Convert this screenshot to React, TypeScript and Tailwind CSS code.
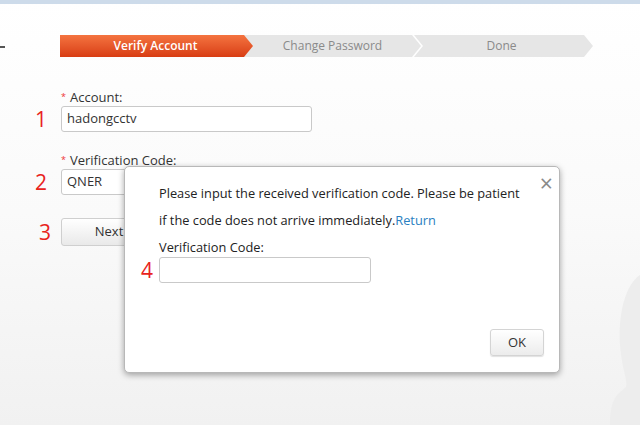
import React from 'react'

const font = { fontFamily: '"Open Sans", "Liberation Sans", sans-serif' }

function Steps() {
  return (
    <div className="flex h-[22px] text-[12px] leading-[22px]">
      <div className="relative z-10 w-[193px] bg-linear-to-b from-[#f4733f] to-[#d83c12] text-center font-semibold text-white [clip-path:polygon(0_0,calc(100%-9px)_0,100%_50%,calc(100%-9px)_100%,0_100%)]">
        <span className="pr-[2px]">Verify Account</span>
      </div>
      <div className="-ml-[9px] w-[177px] bg-[#e6e6e6] text-center text-[#8a8a8a] [clip-path:polygon(0_0,calc(100%-9px)_0,100%_50%,calc(100%-9px)_100%,0_100%)]">
        Change Password
      </div>
      <div className="-ml-[7px] w-[179px] bg-[#e6e6e6] pr-[4px] text-center text-[#8a8a8a] [clip-path:polygon(0_0,calc(100%-9px)_0,100%_50%,calc(100%-9px)_100%,0_100%,9px_50%)]">
        Done
      </div>
    </div>
  )
}

function Field({ num, label, value, top }: { num: string; label: string; value: string; top: string }) {
  return (
    <div className={top}>
      <div className="flex items-center pl-[61px] text-[13px] leading-[16px] text-[#333]">
        <span className="mr-[4px] text-[9px] text-[#e33]">*</span>
        {label}
      </div>
      <div className="mt-[1px] flex items-center">
        <span className="w-[61px] pr-[14px] text-right text-[21px] leading-none text-[#e8231c]">{num}</span>
        <div className="flex h-[26px] w-[251px] items-center rounded-[3px] border border-[#c9c9c9] bg-white px-[5px] text-[13px] text-[#333]">
          {value}
        </div>
      </div>
    </div>
  )
}

function Dialog() {
  return (
    <div className="absolute left-[124px] top-[166px] h-[207px] w-[436px] rounded-[5px] border border-[#b8b8b8] bg-white shadow-[0_2px_6px_rgba(0,0,0,0.35)]">
      <button className="absolute right-[6px] top-[5px] text-[23px] leading-none text-[#8a8a8a]">×</button>
      <div className="pl-[34px] pt-[18px] text-[12.8px] text-[#222]">
        <p className="leading-[16px]">Please input the received verification code. Please be patient</p>
        <p className="mt-[11px] leading-[16px]">
          if the code does not arrive immediately.<span className="text-[#2a7fc1]">Return</span>
        </p>
        <p className="mt-[11px] leading-[16px]">Verification Code:</p>
      </div>
      <div className="mt-[2px] flex items-center">
        <span className="w-[34px] pr-[6px] text-right text-[21px] leading-none text-[#e8231c]">4</span>
        <div className="h-[26px] w-[212px] rounded-[3px] border border-[#c9c9c9] bg-white" />
      </div>
      <div className="mt-[46px] flex justify-end pr-[15px]">
        <button className="h-[27px] w-[54px] rounded-[3px] border border-[#d4d4d4] bg-linear-to-b from-white to-[#ececec] text-[13px] text-[#333] shadow-[0_1px_1px_rgba(0,0,0,0.12)]">
          OK
        </button>
      </div>
    </div>
  )
}

export default function App() {
  return (
    <div className="relative h-[425px] w-[640px] overflow-hidden bg-linear-to-b from-white via-[#fafafa] to-[#f1f1f1]" style={font}>
      <div className="h-[4px] bg-[#cddbea]" />
      <svg className="absolute bottom-0 right-0" width="60" height="150" viewBox="0 0 60 150">
        <path d="M60 0 C45 10 38 40 40 70 C42 95 48 105 46 112 C40 118 30 120 30 150 L60 150 Z" fill="#ededed" />
      </svg>
      <div className="mt-[42px] h-[2px] w-[5px] bg-[#555]" />
      <div className="-mt-[13px] pl-[60px]">
        <Steps />
      </div>
      <Field num="1" label="Account:" value="hadongcctv" top="mt-[32px]" />
      <Field num="2" label="Verification Code:" value="QNER" top="mt-[20px]" />
      <div className="mt-[23px] flex items-center">
        <span className="w-[61px] pr-[10px] text-right text-[21px] leading-none text-[#e8231c]">3</span>
        <button className="h-[28px] w-[96px] rounded-[3px] border border-[#cfcfcf] bg-linear-to-b from-white to-[#e9e9e9] text-[13px] text-[#333]">
          Next
        </button>
      </div>
      <Dialog />
    </div>
  )
}
